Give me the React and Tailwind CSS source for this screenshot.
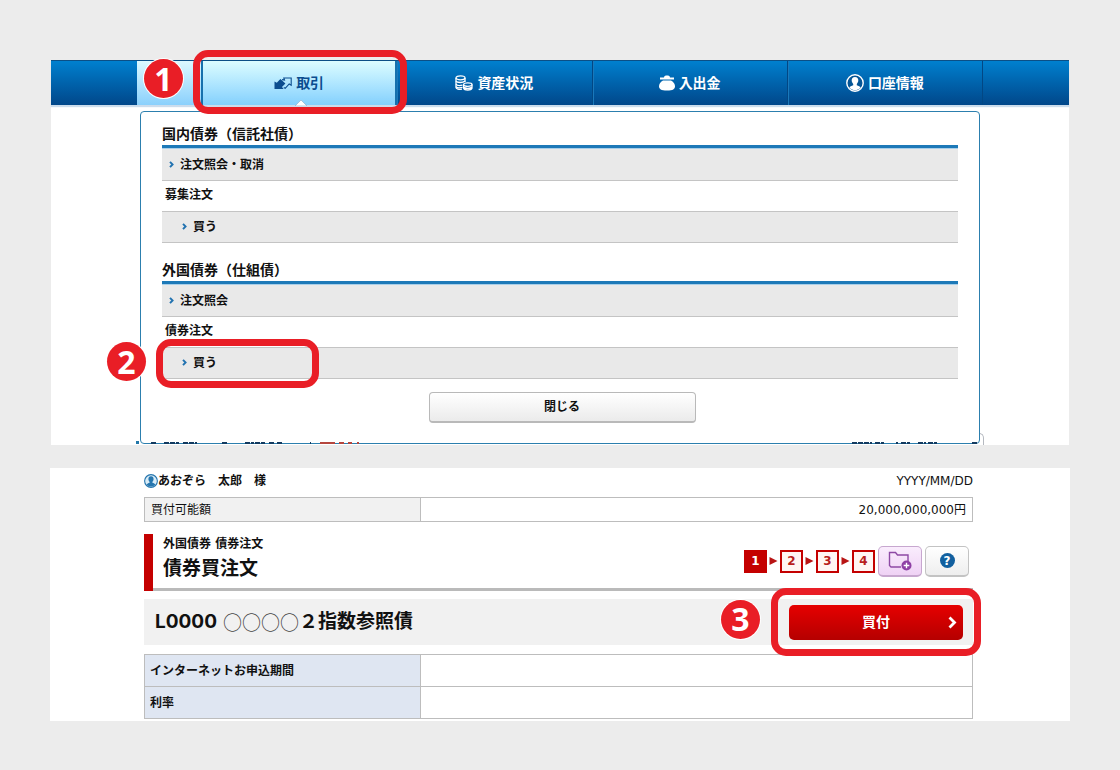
const menuGroups = [
    {
        title: "国内債券（信託社債）",
        inquiry: "注文照会・取消",
        order: "募集注文",
    },
    {
        title: "外国債券（仕組債）",
        inquiry: "注文照会",
        order: "債券注文",
        marked: true,
    },
];

const detailRows = ["インターネットお申込期間", "利率"];

const TradeIcon = () => (
    <svg width="18" height="13" viewBox="0 0 18 13" aria-hidden="true">
        <path d="M8 2.6 L10.5 3 L9.8 1 H17.2 V8.2 L15.2 7 L11.2 11.4 L9.8 10.6" fill="none" stroke="#0b4d8f" strokeWidth="1.1" />
        <path d="M0.5 12 V4.6 L2.8 5.8 L6.4 2 L11.4 6.6 L8 10 L9.6 12 Z" fill="#0b4d8f" />
    </svg>
);

const CoinsIcon = () => (
    <svg width="18" height="16" viewBox="0 0 18 16" fill="none" stroke="#fff" strokeWidth="1.3" aria-hidden="true">
        <ellipse cx="5.5" cy="2.8" rx="4.5" ry="2" />
        <path d="M1 3 V12.5 C1 14 4 14.6 7 14.2 M10 3 V7" />
        <path d="M1 6 C2 8 8 8 10 6 M1 9 C2 10.8 5 10.8 7.5 10.2 M1 11.6 C2 13 5 13 7.5 12.4" />
        <ellipse cx="12.8" cy="9.6" rx="4.2" ry="1.7" />
        <path d="M8.6 9.6 V13.2 C9.5 15.6 16 15.6 17 13.2 V9.6 M8.6 12 C10 13.8 15.6 13.8 17 12" />
    </svg>
);

const PurseIcon = () => (
    <svg width="16" height="16" viewBox="0 0 16 16" fill="#fff" aria-hidden="true">
        <path d="M5 2.5 C5 1 6.3 0.5 8 0.5 C9.7 0.5 11 1 11 2.5 H15 V4.6 H1 V2.5 Z" />
        <path d="M4 5.4 H12 C14.8 7 16 9 16 11.2 C16 14 14 15.6 8 15.6 C2 15.6 0 14 0 11.2 C0 9 1.2 7 4 5.4 Z" />
    </svg>
);

const UserIcon = ({ size, ring, inner }) => (
    <svg width={size} height={size} viewBox="0 0 18 18" aria-hidden="true">
        <circle cx="9" cy="9" r="8.2" fill={inner} stroke={ring} strokeWidth="1.4" />
        <path d="M9 3 C11.3 3 12.4 4.5 12.3 6.6 C12.2 8.3 11.4 9.2 10.8 10 V11.2 C12.5 11.8 14 12.2 14.6 13.6 C13 15.6 11 16.2 9 16.2 C7 16.2 5 15.6 3.4 13.6 C4 12.2 5.5 11.8 7.2 11.2 V10 C6.6 9.2 5.8 8.3 5.7 6.6 C5.6 4.5 6.7 3 9 3 Z" fill={ring} />
    </svg>
);

const FolderIcon = () => (
    <svg width="24" height="20" viewBox="0 0 24 20" fill="none" aria-hidden="true">
        <path d="M13 16 H3 L1.5 14.5 V1.5 H7.5 L9.5 4 H20 V10" stroke="#8e4aa5" strokeWidth="1.4" />
        <circle cx="18.5" cy="14.5" r="5" fill="#8e3fa5" />
        <path d="M15.7 14.5 H21.3 M18.5 11.7 V17.3" stroke="#fff" strokeWidth="1.4" />
    </svg>
);

const Chevron = () => (
    <svg className="mb-px" width="5" height="7" viewBox="0 0 5 7" fill="none" aria-hidden="true">
        <path d="M1 0.8 L3.6 3.5 L1 6.2" stroke="#2172b0" strokeWidth="1.9" />
    </svg>
);

const Badge = ({ number, className }) => (
    <span
        className={`absolute z-20 flex size-[39px] items-center justify-center rounded-full bg-[#e91e26] font-['Open_Sans'] text-[32px] leading-none font-bold text-white ring-1 ring-white ${className}`}
    >
        {number}
    </span>
);

const Marker = ({ className }) => (
    <span className={`pointer-events-none absolute z-10 rounded-[15px] border-[7px] border-[#e91e26] ${className}`} />
);

const NavTab = ({ icon, label }) => (
    <a
        href="#"
        className="flex flex-1 items-center justify-center gap-1 border-r border-[#024784] text-[14px] font-bold text-white shadow-[inset_1px_0_0_#1a79bb]"
    >
        {icon}
        {label}
    </a>
);

const MenuLink = ({ label, className }) => (
    <a href="#" className={`flex h-8 items-center gap-[6px] border-b border-[#c4c4c4] bg-[#e9e9e9] text-[12px] font-bold ${className}`}>
        <Chevron />
        {label}
    </a>
);

const TradeMenu = () => {
    return (
        <div className="relative mx-auto mt-[6px] w-full max-w-[840px]">
            <span className="absolute bottom-0 -left-[4px] h-[3px] w-[3px] bg-[#2277a9]" />
            <span className="absolute -right-[4px] -bottom-px h-3 w-5 rounded-tr-[5px] border-t border-r border-[#b5b9c0]" />
            <div className="relative rounded-[4px] border border-[#2c7fae] bg-white px-[21px] pt-2 pb-5">
                {menuGroups.map((group) => (
                    <section key={group.title} className="mb-[13px]">
                        <h2 className="h-[28px] border-b-[3px] border-[#1d79b8] text-[14px] leading-[28px] font-bold shadow-[0_1px_0_#a9cfe9]">
                            {group.title}
                        </h2>
                        <MenuLink label={group.inquiry} className="mt-px pl-[7px]" />
                        <h3 className="h-[30px] pl-[3px] text-[12px] leading-[28px] font-bold">{group.order}</h3>
                        <div className="relative">
                            <MenuLink label="買う" className="border-t pl-[20px]" />
                            {group.marked && (
                                <>
                                    <Marker className="-top-[8px] -bottom-[9px] -left-[6px] w-[163px]" />
                                    <Badge number={2} className="-top-[5px] -left-[55px]" />
                                </>
                            )}
                        </div>
                    </section>
                ))}
                <div className="flex justify-center pl-1">
                    <button
                        type="button"
                        className="h-[31px] w-[267px] cursor-pointer rounded-[4px] border border-b-2 border-[#b9b9b9] bg-linear-to-b from-white to-[#ebebeb] text-[12px] font-bold"
                    >
                        閉じる
                    </button>
                </div>
            </div>
            <svg className="absolute bottom-0 left-0" width="840" height="2" aria-hidden="true">
                <path d="M11 1 h6 M24 1 h15 M43 1 h14 M82 1 h5 M105 1 h9 M115 1 h10 M129 1 h5 M137 1 h5 M170 1 h1 M712 1 h20 M735 1 h9 M756 1 h2 M761 1 h9 M778 1 h8 M788 1 h9 M832 1 h5" stroke="#123a60" strokeWidth="2" strokeDasharray="5 1" />
                <path d="M180 1 h15 M199 1 h5 M208 1 h4 M217 1 h2" stroke="#b5463e" strokeWidth="2" />
            </svg>
        </div>
    );
};

const Steps = () => (
    <ol className="flex items-center font-['DejaVu_Sans'] text-[12px] font-bold text-[#b81d1d]">
        {[1, 2, 3, 4].map((step) => (
            <li key={step} className="flex items-center">
                {step > 1 && (
                    <svg className="mx-[2px]" width="9" height="8" viewBox="0 0 9 8" aria-hidden="true">
                        <path d="M0.5 0 L8.5 4 L0.5 8 Z" fill="#b81414" />
                    </svg>
                )}
                <span
                    className={`flex size-[23px] items-center justify-center border-2 border-[#c40000] ${
                        step === 1 ? "bg-[#c40000] text-white" : "bg-[#fff5f3]"
                    }`}
                >
                    {step}
                </span>
            </li>
        ))}
    </ol>
);

const App = () => {
    return (
        <div className="min-h-screen bg-[#ececec] px-[50px] py-[60px] font-['DejaVu_Sans','Noto_Sans_CJK_JP',sans-serif] text-[#111111]">
            <section className="mx-px bg-white pb-px">
                <nav className="h-[45px] border-t border-[#0b4f86] bg-linear-to-b from-[#0080cf] to-[#01478a] shadow-[0_2px_1px_#cbdcec]">
                    <div className="mx-auto flex h-full max-w-[846px]">
                        <a href="#" aria-label="ホーム" className="w-[66px] border-r-2 border-[#1670ad] bg-linear-to-b from-[#dcf9ff] to-[#8ad0fc]" />
                        <div className="relative flex flex-1">
                            <a
                                href="#"
                                className="flex flex-1 items-center justify-center gap-1 border-r-2 border-[#1670ad] bg-linear-to-b from-[#dcfdff] to-[#83d0fd] text-[14px] font-bold text-[#0b4d8f]"
                            >
                                <TradeIcon />
                                取引
                            </a>
                            <svg className="absolute -bottom-px left-1/2 -ml-[5px]" width="12" height="6" viewBox="0 0 12 6" aria-hidden="true">
                                <path d="M0 6 L6 0 L12 6 Z" fill="#fff" stroke="#8aa9c4" strokeWidth="0.6" />
                            </svg>
                            <Marker className="-top-[11px] -right-[10px] -bottom-[9px] -left-[10px]" />
                            <Badge number={1} className="-top-[2px] -left-[59px]" />
                        </div>
                        <NavTab icon={<CoinsIcon />} label="資産状況" />
                        <NavTab icon={<PurseIcon />} label="入出金" />
                        <NavTab icon={<UserIcon size={18} ring="#fff" inner="#045596" />} label="口座情報" />
                    </div>
                </nav>
                <TradeMenu />
            </section>

            <main className="mt-[23px] bg-white pr-[97px] pb-[2px] pl-[94px]">
                <div className="flex h-[29px] items-center justify-between pb-[3px] text-[12px]">
                    <p className="flex items-center font-bold">
                        <UserIcon size={14} ring="#2676ae" inner="#d9ecf7" />
                        あおぞら　太郎　様
                    </p>
                    <time>YYYY/MM/DD</time>
                </div>

                <table className="w-full table-fixed border-collapse border border-[#bdbdbd] text-[12px]">
                    <tbody>
                        <tr className="h-[24px]">
                            <th scope="row" className="w-1/3 border border-[#bdbdbd] bg-[#f1f1f1] px-[6px] text-left font-normal">
                                買付可能額
                            </th>
                            <td className="px-[6px] text-right">20,000,000,000円</td>
                        </tr>
                    </tbody>
                </table>

                <header className="mt-3 flex h-[57px] justify-between border-l-[9px] border-[#c40000]">
                    <div className="flex flex-1 justify-between border-b-[3px] border-[#bababa] pl-[10px]">
                        <div>
                            <p className="text-[12px] leading-5 font-bold">外国債券 債券注文</p>
                            <h1 className="text-[19px] leading-[28px] font-bold">債券買注文</h1>
                        </div>
                        <div className="mr-[4px] flex items-center gap-[3px]">
                            <Steps />
                            <button
                                type="button"
                                aria-label="フォルダに追加"
                                className="flex h-[31px] w-[44px] cursor-pointer items-center justify-center rounded-[5px] border border-b-2 border-[#c7a7cf] bg-linear-to-b from-[#faedfd] to-[#efd2f5]"
                            >
                                <FolderIcon />
                            </button>
                            <button
                                type="button"
                                aria-label="ヘルプ"
                                className="flex h-[31px] w-[44px] cursor-pointer items-center justify-center rounded-[5px] border border-b-2 border-[#c3c3c3] bg-linear-to-b from-white to-[#eeeeee]"
                            >
                                <span className="flex size-[15px] items-center justify-center rounded-full bg-[#12609f] text-[12px] leading-none font-bold text-white">?</span>
                            </button>
                        </div>
                    </div>
                </header>

                <div className="mt-2 flex h-[46px] items-center justify-between bg-[#f1f1f1] pl-[11px]">
                    <h2 className="flex items-center font-['Inter','Noto_Sans_CJK_JP',sans-serif] text-[19px] font-bold">
                        <span className="mr-[6px]">L0000</span>
                        <span className="font-['Noto_Sans_CJK_JP'] font-normal text-[#444444]">○○○○</span>
                        <span>２指数参照債</span>
                    </h2>
                    <div className="relative mr-[10px]">
                        <button
                            type="button"
                            className="relative block h-[35px] w-[174px] cursor-pointer rounded-[5px] bg-linear-to-b from-[#e60000] to-[#b50000] text-[14px] font-bold text-white"
                        >
                            買付
                            <svg className="absolute top-[11px] right-[6px]" width="9" height="13" viewBox="0 0 9 13" fill="none" aria-hidden="true">
                                <path d="M1.5 1.5 L6.5 6.5 L1.5 11.5" stroke="#fff" strokeWidth="2.8" />
                            </svg>
                        </button>
                        <Marker className="-top-[17px] -right-[18px] -bottom-[16px] -left-[18px]" />
                        <Badge number={3} className="-top-[5px] -left-[68px]" />
                    </div>
                </div>

                <table className="mt-[9px] w-full table-fixed border-collapse border border-[#bdbdbd] text-[12px]">
                    <tbody>
                        {detailRows.map((label) => (
                            <tr key={label} className="h-[32px] border-b border-[#bdbdbd]">
                                <th scope="row" className="w-1/3 border border-[#bdbdbd] bg-[#dfe6f2] px-[5px] text-left font-bold">
                                    {label}
                                </th>
                                <td></td>
                            </tr>
                        ))}
                    </tbody>
                </table>
            </main>
        </div>
    );
};

export default App;
